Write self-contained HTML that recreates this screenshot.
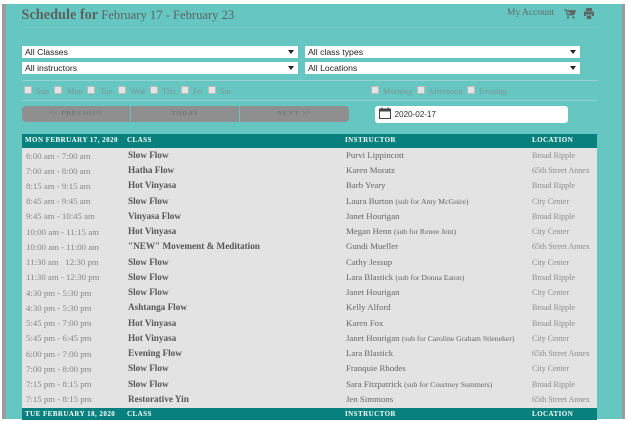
<!DOCTYPE html>
<html><head><meta charset="utf-8"><title>Schedule</title>
<style>
html,body{margin:0;padding:0;background:#fff}
#p{position:relative;width:628px;height:421px;overflow:hidden;background:#fff;font-family:"Liberation Serif",serif;filter:blur(.3px)}
#p div,#p span,#p svg{position:absolute;white-space:pre}
.bg{left:2px;top:4px;width:623px;height:415px;background:#66c6c2}
.lg{left:2px;top:4px;width:4px;height:415px;background:#9b9b9b}
.rg{left:622px;top:4px;width:3px;height:415px;background:#9b9b9b}
.ln{left:22px;width:576px;height:1px;background:#8fd6d2}
.sel{height:12px;background:#fff;font:8.7px/12px "Liberation Sans",sans-serif;color:#222;text-indent:3px}
.sel i{position:absolute;right:4px;top:4px;width:0;height:0;border-left:3px solid transparent;border-right:3px solid transparent;border-top:4px solid #222}
.cb{top:85.500px;width:6px;height:6px;background:#e4e4e4;border:1px solid #bbb;border-radius:1px}
.cl{top:86.500px;font-size:8px;line-height:10px;color:#7f9391;letter-spacing:.2px}
.nv{top:106px;height:15.500px;line-height:15px;font-size:6.500px;font-weight:bold;letter-spacing:1px;color:#6f7676;text-align:center}
.h{left:22px;width:575px;height:13.500px;background:#08817e;color:#fff;font-weight:bold;font-size:7px;line-height:13px;letter-spacing:.45px}
.h span{top:0}
.t{left:4px;font-size:8.800px;color:#868686}
.c{left:106px;font-size:9.200px;font-weight:bold;color:#555}
.n{left:324px;font-size:8.800px;color:#666}
.n small{font-size:7.700px}
.o{left:510px;font-size:8px;color:#8b8b8b}
.r{left:22px;width:575px;height:15.240px}
.r span{top:0;line-height:15px}
.r .t{top:.5px}
</style></head><body>
<div id="p">
<div class="bg"></div><div class="lg"></div><div class="rg"></div>
<div style="left:21.500px;top:6px;line-height:18px;color:#5c6362;font-size:12.600px"><b style="font-size:14.300px">Schedule for</b> February 17 - February 23</div>
<div style="left:507px;top:7px;font-size:9.500px;line-height:12px;color:#5f6b6a">My Account</div>
<svg style="left:564px;top:9px" width="12" height="10" viewBox="0 0 12 10"><path d="M0 .5h2l1 5.500h7M2.400 1.500H11.500L10.500 5H3z" fill="#5c6665" stroke="#5c6665" stroke-width=".8"/><circle cx="4" cy="8.500" r="1.100" fill="#5c6665"/><circle cx="9.500" cy="8.500" r="1.100" fill="#5c6665"/></svg>
<svg style="left:584px;top:8px" width="10" height="11" viewBox="0 0 10 11"><path d="M2 0h6v3H2zM0 3.500h10V8H8v-1.500H2V8H0zM2.800 7.500h4.400V11H2.800z" fill="#5c6665"/></svg>
<div style="left:22px;top:27px;width:576px;height:1px;background:#7cc4bf"></div>

<div class="sel" style="left:22px;top:46px;width:276px">All Classes<i></i></div>
<div class="sel" style="left:305px;top:46px;width:275px">All class types<i></i></div>
<div class="sel" style="left:22px;top:62px;width:276px">All instructors<i></i></div>
<div class="sel" style="left:305px;top:62px;width:275px">All Locations<i></i></div>
<div class="ln" style="top:79.500px"></div>

<div class="cb" style="left:24px"></div><div class="cl" style="left:36px">Sun</div>
<div class="cb" style="left:54px"></div><div class="cl" style="left:67px">Mon</div>
<div class="cb" style="left:87px"></div><div class="cl" style="left:100px">Tue</div>
<div class="cb" style="left:118px"></div><div class="cl" style="left:130px">Wed</div>
<div class="cb" style="left:150px"></div><div class="cl" style="left:162px">Thu</div>
<div class="cb" style="left:181px"></div><div class="cl" style="left:193px">Fri</div>
<div class="cb" style="left:208px"></div><div class="cl" style="left:220px">Sat</div>
<div class="cb" style="left:371px"></div><div class="cl" style="left:383px">Morning</div>
<div class="cb" style="left:417px"></div><div class="cl" style="left:428px">Afternoon</div>
<div class="cb" style="left:467px"></div><div class="cl" style="left:479px">Evening</div>
<div class="ln" style="top:99.500px;width:575px"></div>

<div class="nv" style="left:22px;width:108px;background:#8f8f8f;border-radius:4px 0 0 4px">&lt;&lt; PREVIOUS</div>
<div class="nv" style="left:131px;width:108px;background:#8f8f8f">TODAY</div>
<div class="nv" style="left:240px;width:109px;background:#8f8f8f;border-radius:0 4px 4px 0">NEXT &gt;&gt;</div>

<div style="left:375px;top:105.500px;width:193px;height:17px;background:#fff;border-radius:3px"></div>
<svg style="left:379px;top:107px" width="12" height="12" viewBox="0 0 12 12"><path d="M.5 2h11v9.500H.5z" fill="#fff" stroke="#444" stroke-width="1"/><path d="M.5 2h11v2.500H.5z" fill="#444"/><path d="M3 .5v2M9 .5v2" stroke="#444" stroke-width="1.200"/></svg>
<div style="left:394.500px;top:108px;font:8.300px/12px 'Liberation Sans',sans-serif;letter-spacing:-.1px;color:#333">2020-02-17</div>

<div style="left:22px;top:147px;width:575px;height:261px;background:#e3e3e3"></div>
<div class="h" style="top:134px"><span style="left:3px">MON FEBRUARY 17, 2020</span><span style="left:105px">CLASS</span><span style="left:323px">INSTRUCTOR</span><span style="left:510px">LOCATION</span></div>

<div class="r" style="top:148px"><span class="t">6:00 am - 7:00 am</span><span class="c">Slow Flow</span><span class="n">Purvi Lippincott</span><span class="o">Broad Ripple</span></div>
<div class="r" style="top:163.240px"><span class="t">7:00 am - 8:00 am</span><span class="c">Hatha Flow</span><span class="n">Karen Moratz</span><span class="o">65th Street Annex</span></div>
<div class="r" style="top:178.480px"><span class="t">8:15 am - 9:15 am</span><span class="c">Hot Vinyasa</span><span class="n">Barb Yeary</span><span class="o">Broad Ripple</span></div>
<div class="r" style="top:193.720px"><span class="t">8:45 am - 9:45 am</span><span class="c">Slow Flow</span><span class="n">Laura Burton <small>(sub for Amy McGuire)</small></span><span class="o">City Center</span></div>
<div class="r" style="top:208.960px"><span class="t">9:45 am - 10:45 am</span><span class="c">Vinyasa Flow</span><span class="n">Janet Hourigan</span><span class="o">Broad Ripple</span></div>
<div class="r" style="top:224.200px"><span class="t">10:00 am - 11:15 am</span><span class="c">Hot Vinyasa</span><span class="n">Megan Henn <small>(sub for Renee Jent)</small></span><span class="o">City Center</span></div>
<div class="r" style="top:239.440px"><span class="t">10:00 am - 11:00 am</span><span class="c">"NEW" Movement &amp; Meditation</span><span class="n">Gundi Mueller</span><span class="o">65th Street Annex</span></div>
<div class="r" style="top:254.680px"><span class="t">11:30 am   12:30 pm</span><span class="c">Slow Flow</span><span class="n">Cathy Jessup</span><span class="o">City Center</span></div>
<div class="r" style="top:269.920px"><span class="t">11:30 am - 12:30 pm</span><span class="c">Slow Flow</span><span class="n">Lara Blastick <small>(sub for Donna Eaton)</small></span><span class="o">Broad Ripple</span></div>
<div class="r" style="top:285.160px"><span class="t">4:30 pm - 5:30 pm</span><span class="c">Slow Flow</span><span class="n">Janet Hourigan</span><span class="o">City Center</span></div>
<div class="r" style="top:300.400px"><span class="t">4:30 pm - 5:30 pm</span><span class="c">Ashtanga Flow</span><span class="n">Kelly Alford</span><span class="o">Broad Ripple</span></div>
<div class="r" style="top:315.640px"><span class="t">5:45 pm - 7:00 pm</span><span class="c">Hot Vinyasa</span><span class="n">Karen Fox</span><span class="o">Broad Ripple</span></div>
<div class="r" style="top:330.880px"><span class="t">5:45 pm - 6:45 pm</span><span class="c">Hot Vinyasa</span><span class="n">Janet Hourigan <small>(sub for Caroline Graham Stieneker)</small></span><span class="o">City Center</span></div>
<div class="r" style="top:346.120px"><span class="t">6:00 pm - 7:00 pm</span><span class="c">Evening Flow</span><span class="n">Lara Blastick</span><span class="o">65th Street Annex</span></div>
<div class="r" style="top:361.360px"><span class="t">7:00 pm - 8:00 pm</span><span class="c">Slow Flow</span><span class="n">Franquie Rhodes</span><span class="o">City Center</span></div>
<div class="r" style="top:376.600px"><span class="t">7:15 pm - 8:15 pm</span><span class="c">Slow Flow</span><span class="n">Sara Fitzpatrick <small>(sub for Courtney Summers)</small></span><span class="o">Broad Ripple</span></div>
<div class="r" style="top:391.840px"><span class="t">7:15 pm - 8:15 pm</span><span class="c">Restorative Yin</span><span class="n">Jen Simmons</span><span class="o">65th Street Annex</span></div>

<div class="h" style="top:407.500px;height:12px"><span style="left:3px">TUE FEBRUARY 18, 2020</span><span style="left:105px">CLASS</span><span style="left:323px">INSTRUCTOR</span><span style="left:510px">LOCATION</span></div>
</div>
</body></html>
